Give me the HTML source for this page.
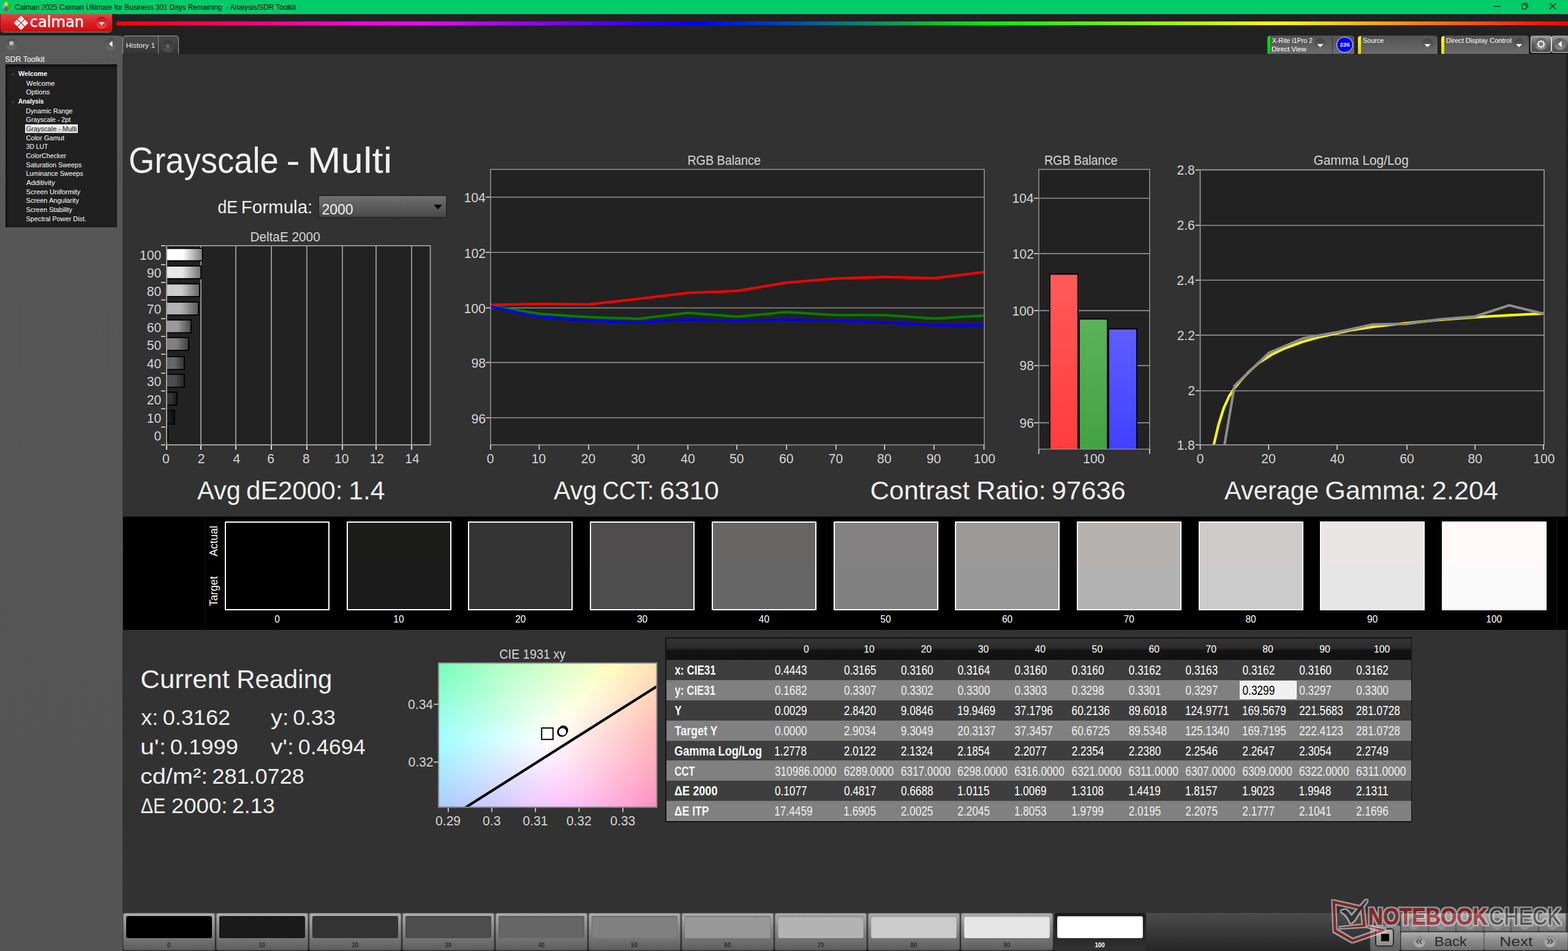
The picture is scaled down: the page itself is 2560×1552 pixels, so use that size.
<!DOCTYPE html>
<html lang="en"><head><meta charset="utf-8"><title>Calman - Grayscale - Multi</title>
<style>
html,body{margin:0;padding:0;background:#323232}
body{width:2560px;height:1552px;overflow:hidden;font-family:"Liberation Sans",sans-serif}
#app{position:relative;width:2560px;height:1552px;overflow:hidden;background:#323232}
#app div,#app svg,#app header,#app aside,#app nav,#app section,#app footer,#app main{position:absolute}
#app header,#app aside,#app nav,#app section,#app footer,#app main,#ribbon,#devices,#watermark{left:0;top:0}
svg{overflow:visible}
svg text{font-family:"Liberation Sans",sans-serif;white-space:pre}
</style></head>
<body><div id="app">
<header id="titlebar"><div style="left:0px;top:0px;width:2560px;height:23px;background:#00cc6a"></div><svg style="left:0px;top:0px" width="2560" height="23" viewBox="0 0 2560 23"><path d="M10 2.6L14.3 6.9L10 11.2L5.7 6.9Z" fill="#ffcc00"/><path d="M5.9 6.7L10.2 11L5.9 15.3L1.6 11Z" fill="#33bbff"/><path d="M14.1 6.7L18.4 11L14.1 15.3L9.8 11Z" fill="#11cc11"/><path d="M10 10.8L14.3 15.1L10 19.4L5.7 15.1Z" fill="#ee2255"/><text x="24.01" y="15.9" font-size="12.2" textLength="459.18" lengthAdjust="spacingAndGlyphs" fill="#000">Calman 2025 Calman Ultimate for Business 301 Days Remaining  - Analysis/SDR Toolkit</text><line x1="2439.3" y1="10.5" x2="2449.5" y2="10.5" stroke="#000" stroke-width="1.1"/><rect x="2484.5" y="7.2" width="7.6" height="7.6" rx="1.6" fill="none" stroke="#000" stroke-width="1.1"/><path d="M2486.6 5.2h5.4a2 2 0 0 1 2 2v5.6" fill="none" stroke="#000" stroke-width="1.1"/><path d="M2530 5L2540.4 15.2M2540.4 5L2530 15.2" fill="none" stroke="#000" stroke-width="1.1"/></svg></header>
<div id="ribbon"><div style="left:0px;top:23px;width:2560px;height:65px;background:#212121"></div><div style="left:190px;top:35px;width:2370px;height:6px;background:linear-gradient(to right,#ff0000 0%,#ff00ff 20%,#0000ff 40%,#00ee00 60%,#ffff00 80%,#ff0000 100%)"></div><div style="left:1px;top:23px;width:182px;height:29.2px;background:linear-gradient(#e24444 0%,#d82222 50%,#cc0c0c 100%);border-radius:0 0 5px 5px;box-shadow:0 1px 0 #8a8a8a,-1px 0 0 #6a1a1a,1px 0 0 #6a1a1a"></div><svg style="left:0px;top:23px" width="190" height="31" viewBox="0 23 190 31"><g transform="translate(34.4 37.35) rotate(45)"><path d="M-0.6 -6.85H-6.85V-0.6" fill="none" stroke="#fff" stroke-width="2.9" stroke-linejoin="round"/><rect x="-5.25" y="-5.25" width="4.7" height="4.7" rx="1" fill="#fff"/><path d="M-0.6 6.85H-6.85V0.6" fill="none" stroke="#fff" stroke-width="2.9" stroke-linejoin="round"/><rect x="-5.25" y="0.55" width="4.7" height="4.7" rx="1" fill="#fff"/><path d="M0.6 -6.85H6.85V-0.6" fill="none" stroke="#fff" stroke-width="2.9" stroke-linejoin="round"/><rect x="0.55" y="-5.25" width="4.7" height="4.7" rx="1" fill="#fff"/><path d="M0.6 6.85H6.85V0.6" fill="none" stroke="#fff" stroke-width="2.9" stroke-linejoin="round"/><rect x="0.55" y="0.55" width="4.7" height="4.7" rx="1" fill="#fff"/></g><text x="48.77" y="43.6" font-size="23.9" textLength="88.28" lengthAdjust="spacingAndGlyphs" fill="#fff" style='font-family:"DejaVu Sans", sans-serif' stroke="#fff" stroke-width="0.45">calman</text><defs><linearGradient id="cbg" x1="0" y1="0" x2="0" y2="1"><stop offset="0" stop-color="#c40c14"/><stop offset="1" stop-color="#e45050"/></linearGradient></defs><circle cx="166" cy="37" r="9.8" fill="url(#cbg)"/><path d="M161 36.2h10l-5 4.9z" fill="#fff"/></svg></div>
<aside id="sidebar"><div style="left:0px;top:58px;width:200px;height:1494px;background:linear-gradient(#5a5a5a 0,#565656 20%,#545454 100%);border-radius:0 4px 0 0"></div><div style="left:9px;top:62.3px;width:19.6px;height:19.6px;border-radius:50%;background:linear-gradient(#4c4c4c,#6c6c6c)"></div><div style="left:14.6px;top:67.2px;width:8px;height:8px;border-radius:50%;background:radial-gradient(circle at 40% 35%,#d8d8d8 0%,#a8a8a8 45%,#6a6a6a 100%)"></div><div style="left:171.1px;top:62.3px;width:19.6px;height:19.6px;border-radius:50%;background:linear-gradient(#4c4c4c,#6c6c6c)"></div><div style="left:9px;top:105px;width:182px;height:266px;background:#202020;box-shadow:inset 2px 3px 4px #0a0a0a"></div><div style="left:41px;top:203px;width:86.3px;height:14px;background:linear-gradient(#f4f4f4,#d0d0d0);border:1px solid #fafafa;box-sizing:border-box"></div><svg style="left:0px;top:58px" width="200" height="320" viewBox="0 58 200 320"><path d="M183.5 66.6v10l-5.4-5z" fill="#fff"/><text x="8.25" y="100.6" font-size="12.2" textLength="64.64" lengthAdjust="spacingAndGlyphs" fill="#fff">SDR Toolkit</text><text x="29.99" y="123.9" font-size="11.3" textLength="47.28" lengthAdjust="spacingAndGlyphs" fill="#fff" font-weight="700">Welcome</text><text x="43.05" y="139.8" font-size="11.3" textLength="46.44" lengthAdjust="spacingAndGlyphs" fill="#fff">Welcome</text><text x="42.56" y="153.9" font-size="11.3" textLength="38.94" lengthAdjust="spacingAndGlyphs" fill="#fff">Options</text><text x="29.75" y="168.9" font-size="11.3" textLength="41.67" lengthAdjust="spacingAndGlyphs" fill="#fff" font-weight="700">Analysis</text><text x="42.22" y="184.8" font-size="11.3" textLength="76.36" lengthAdjust="spacingAndGlyphs" fill="#fff">Dynamic Range</text><text x="42.56" y="198.9" font-size="11.3" textLength="72.62" lengthAdjust="spacingAndGlyphs" fill="#fff">Grayscale - 2pt</text><text x="42.75" y="213.9" font-size="11.3" textLength="82.49" lengthAdjust="spacingAndGlyphs" fill="#222">Grayscale - Multi</text><text x="42.54" y="228.9" font-size="11.3" textLength="62.54" lengthAdjust="spacingAndGlyphs" fill="#fff">Color Gamut</text><text x="42.71" y="243" font-size="11.3" textLength="35.53" lengthAdjust="spacingAndGlyphs" fill="#fff">3D LUT</text><text x="42.56" y="257.8" font-size="11.3" textLength="65.42" lengthAdjust="spacingAndGlyphs" fill="#fff">ColorChecker</text><text x="42.61" y="272.8" font-size="11.3" textLength="90.88" lengthAdjust="spacingAndGlyphs" fill="#fff">Saturation Sweeps</text><text x="42.42" y="286.9" font-size="11.3" textLength="93.36" lengthAdjust="spacingAndGlyphs" fill="#fff">Luminance Sweeps</text><text x="43.08" y="301.9" font-size="11.3" textLength="46.75" lengthAdjust="spacingAndGlyphs" fill="#fff">Additivity</text><text x="42.59" y="316.9" font-size="11.3" textLength="88.63" lengthAdjust="spacingAndGlyphs" fill="#fff">Screen Uniformity</text><text x="42.6" y="330.9" font-size="11.3" textLength="86.32" lengthAdjust="spacingAndGlyphs" fill="#fff">Screen Angularity</text><text x="42.61" y="345.9" font-size="11.3" textLength="75.31" lengthAdjust="spacingAndGlyphs" fill="#fff">Screen Stability</text><text x="42.61" y="360.9" font-size="11.3" textLength="98.49" lengthAdjust="spacingAndGlyphs" fill="#fff">Spectral Power Dist.</text><path d="M23 122.7h-5.6l5.6-3.6z" fill="#484848"/><path d="M23 167.7h-5.6l5.6-3.6z" fill="#484848"/></svg></aside>
<nav id="tabs"><div style="left:199.6px;top:58px;width:92.6px;height:30px;background:linear-gradient(#4a4a4a,#343434);border:1px solid #9a9a9a;border-bottom:none;border-radius:5px 5px 0 0;box-sizing:border-box"></div><div style="left:258px;top:59px;width:1.2px;height:29px;background:#8a8a8a"></div><div style="left:264.4px;top:65.3px;width:19.6px;height:19.6px;border-radius:50%;background:linear-gradient(#363636,#4e4e4e)"></div><svg style="left:200px;top:58px" width="100" height="30" viewBox="200 58 100 30"><text x="205.51" y="77.7" font-size="11.6" textLength="47.68" lengthAdjust="spacingAndGlyphs" fill="#eee">History 1</text><path d="M274.1 71.6v7.2M270.5 75.2h7.2" stroke="#888" stroke-width="1.1" fill="none"/></svg></nav>
<div id="devices"><div style="left:2068.5px;top:58px;width:142.5px;height:30px;background:linear-gradient(#535353,#6b6b6b);border-radius:5px 5px 0 0"></div><div style="left:2069px;top:59px;width:5.2px;height:29px;background:linear-gradient(#00e000,#00c800);border-radius:4px 0 0 0"></div><div style="left:2217px;top:58px;width:130px;height:30px;background:linear-gradient(#535353,#6b6b6b);border-radius:5px 5px 0 0"></div><div style="left:2217.3px;top:59px;width:5.2px;height:29px;background:linear-gradient(#ffff00,#d8d800);border-radius:4px 0 0 0"></div><div style="left:2353px;top:58px;width:143.2px;height:30px;background:linear-gradient(#535353,#6b6b6b);border-radius:5px 5px 0 0"></div><div style="left:2353.3px;top:59px;width:5.2px;height:29px;background:linear-gradient(#ffff00,#d8d800);border-radius:4px 0 0 0"></div><div style="left:2145.5px;top:62.8px;width:20px;height:20px;border-radius:50%;background:linear-gradient(#424242,#6e6e6e)"></div><div style="left:2320.6px;top:62.8px;width:20px;height:20px;border-radius:50%;background:linear-gradient(#424242,#6e6e6e)"></div><div style="left:2470.1px;top:62.8px;width:20px;height:20px;border-radius:50%;background:linear-gradient(#424242,#6e6e6e)"></div><div style="left:2174.6px;top:61px;width:1.2px;height:27px;background:#3c3c3c"></div><div style="left:2182.3px;top:59.6px;width:26.6px;height:26.6px;border-radius:50%;background:#0000f0;border:1px solid #e8e8ff;box-sizing:border-box"></div><div style="left:2499px;top:57.5px;width:34px;height:28.7px;background:linear-gradient(#9c9c9c,#5a5a5a 55%,#4e4e4e);border:1px solid #d8d8d8;border-top-color:#8a8a8a;border-radius:4px;box-sizing:border-box"></div><div style="left:2533px;top:57.5px;width:34px;height:28.7px;background:linear-gradient(#9c9c9c,#5a5a5a 55%,#4e4e4e);border:1px solid #d8d8d8;border-top-color:#8a8a8a;border-radius:4px;box-sizing:border-box"></div><div style="left:2506.4px;top:62.2px;width:19.4px;height:19.4px;border-radius:50%;background:linear-gradient(#5a5a5a,#8a8a8a)"></div><div style="left:2537.2px;top:62.2px;width:19.4px;height:19.4px;border-radius:50%;background:linear-gradient(#5a5a5a,#8a8a8a)"></div><svg style="left:2060px;top:56px" width="500" height="34" viewBox="2060 56 500 34"><text x="2076.66" y="70.1" font-size="11.5" textLength="66.38" lengthAdjust="spacingAndGlyphs" fill="#fff">X-Rite i1Pro 2</text><text x="2076.08" y="83.8" font-size="11.5" textLength="56.69" lengthAdjust="spacingAndGlyphs" fill="#fff">Direct View</text><text x="2225.01" y="70" font-size="11.5" textLength="34.37" lengthAdjust="spacingAndGlyphs" fill="#fff">Source</text><text x="2360.79" y="69.7" font-size="11.5" textLength="107.15" lengthAdjust="spacingAndGlyphs" fill="#fff">Direct Display Control</text><path d="M2150.4 72.1h10.2l-5.1 5z" fill="#fff"/><path d="M2325.5 72.1h10.2l-5.1 5z" fill="#fff"/><path d="M2475 72.1h10.2l-5.1 5z" fill="#fff"/><text x="2187.46" y="76.3" font-size="9.6" textLength="16.21" lengthAdjust="spacingAndGlyphs" fill="#fff" font-weight="700">235</text><g transform="translate(2516.1 72)"><rect x="-1.5" y="-6.6" width="3" height="3" transform="rotate(0)" fill="#ddd"/><rect x="-1.5" y="-6.6" width="3" height="3" transform="rotate(45)" fill="#ddd"/><rect x="-1.5" y="-6.6" width="3" height="3" transform="rotate(90)" fill="#ddd"/><rect x="-1.5" y="-6.6" width="3" height="3" transform="rotate(135)" fill="#ddd"/><rect x="-1.5" y="-6.6" width="3" height="3" transform="rotate(180)" fill="#ddd"/><rect x="-1.5" y="-6.6" width="3" height="3" transform="rotate(225)" fill="#ddd"/><rect x="-1.5" y="-6.6" width="3" height="3" transform="rotate(270)" fill="#ddd"/><rect x="-1.5" y="-6.6" width="3" height="3" transform="rotate(315)" fill="#ddd"/><circle r="4.1" fill="none" stroke="#ddd" stroke-width="1.9"/></g><path d="M2549.6 66.8v10.4l-5.8-5.2z" fill="#fff"/></svg></div>
<main id="main"><div style="left:200px;top:88px;width:2360px;height:1.4px;background:#2a2a2a"></div><div style="left:2556px;top:88px;width:4px;height:1402px;background:linear-gradient(to right,#2e2e2e,#1c1c1c)"></div><div style="left:519px;top:318.2px;width:210.7px;height:37.8px;background:linear-gradient(#707070,#484848);border:2px solid #282828;box-sizing:border-box"></div><svg style="left:200px;top:225px" width="2360" height="600" viewBox="200 225 2360 600"><text y="282.2" font-size="59.4" fill="#f0f0f0"><tspan x="209.97" textLength="244.75" lengthAdjust="spacingAndGlyphs">Grayscale</tspan> <tspan x="467.38" textLength="22.64" lengthAdjust="spacingAndGlyphs">-</tspan> <tspan x="502.02" textLength="138.39" lengthAdjust="spacingAndGlyphs">Multi</tspan></text><text y="347.8" font-size="29" fill="#f0f0f0"><tspan x="355.49" textLength="32.35" lengthAdjust="spacingAndGlyphs">dE</tspan> <tspan x="393.68" textLength="116.62" lengthAdjust="spacingAndGlyphs">Formula:</tspan></text><text x="525.44" y="349.9" font-size="23" textLength="51.15" lengthAdjust="spacingAndGlyphs" fill="#f0f0f0">2000</text><path d="M708.2 334h13.6l-6.8 7.8z" fill="#000"/><text y="815.1" font-size="42.4" fill="#f0f0f0"><tspan x="322.02" textLength="70.73" lengthAdjust="spacingAndGlyphs">Avg</tspan> <tspan x="401.92" textLength="157.64" lengthAdjust="spacingAndGlyphs">dE2000:</tspan> <tspan x="569.24" textLength="59.41" lengthAdjust="spacingAndGlyphs">1.4</tspan></text><text y="815.1" font-size="42.4" fill="#f0f0f0"><tspan x="904.02" textLength="70.31" lengthAdjust="spacingAndGlyphs">Avg</tspan> <tspan x="983.58" textLength="83.8" lengthAdjust="spacingAndGlyphs">CCT:</tspan> <tspan x="1077.29" textLength="96.71" lengthAdjust="spacingAndGlyphs">6310</tspan></text><text y="815.1" font-size="42.4" fill="#f0f0f0"><tspan x="1420.72" textLength="162.5" lengthAdjust="spacingAndGlyphs">Contrast</tspan> <tspan x="1593.92" textLength="113.85" lengthAdjust="spacingAndGlyphs">Ratio:</tspan> <tspan x="1716.86" textLength="120.95" lengthAdjust="spacingAndGlyphs">97636</tspan></text><text y="815.1" font-size="42.4" fill="#f0f0f0"><tspan x="1999.12" textLength="153.92" lengthAdjust="spacingAndGlyphs">Average</tspan> <tspan x="2163.33" textLength="165.41" lengthAdjust="spacingAndGlyphs">Gamma:</tspan> <tspan x="2337.82" textLength="108.35" lengthAdjust="spacingAndGlyphs">2.204</tspan></text></svg><section id="charts"><svg style="left:210px;top:370px" width="520" height="400" viewBox="210 370 520 400"><rect x="272" y="401" width="430.5" height="325" fill="#222222"/><line x1="328" y1="401" x2="328" y2="726" stroke="#929292" stroke-width="2"/><line x1="385" y1="401" x2="385" y2="726" stroke="#929292" stroke-width="2"/><line x1="443" y1="401" x2="443" y2="726" stroke="#929292" stroke-width="2"/><line x1="501" y1="401" x2="501" y2="726" stroke="#929292" stroke-width="2"/><line x1="559" y1="401" x2="559" y2="726" stroke="#929292" stroke-width="2"/><line x1="614" y1="401" x2="614" y2="726" stroke="#929292" stroke-width="2"/><line x1="672" y1="401" x2="672" y2="726" stroke="#929292" stroke-width="2"/><defs><linearGradient id="db0" x1="0" x2="1" y1="0" y2="0"><stop offset="0" stop-color="#000000"/><stop offset="0.45" stop-color="#000000"/><stop offset="1" stop-color="#000000"/></linearGradient><linearGradient id="db1" x1="0" x2="1" y1="0" y2="0"><stop offset="0" stop-color="#1a1a1a"/><stop offset="0.45" stop-color="#1a1a1a"/><stop offset="1" stop-color="#0d0d0d"/></linearGradient><linearGradient id="db2" x1="0" x2="1" y1="0" y2="0"><stop offset="0" stop-color="#333333"/><stop offset="0.45" stop-color="#333333"/><stop offset="1" stop-color="#191919"/></linearGradient><linearGradient id="db3" x1="0" x2="1" y1="0" y2="0"><stop offset="0" stop-color="#4d4d4d"/><stop offset="0.45" stop-color="#4d4d4d"/><stop offset="1" stop-color="#262626"/></linearGradient><linearGradient id="db4" x1="0" x2="1" y1="0" y2="0"><stop offset="0" stop-color="#666666"/><stop offset="0.45" stop-color="#666666"/><stop offset="1" stop-color="#333333"/></linearGradient><linearGradient id="db5" x1="0" x2="1" y1="0" y2="0"><stop offset="0" stop-color="#808080"/><stop offset="0.45" stop-color="#808080"/><stop offset="1" stop-color="#404040"/></linearGradient><linearGradient id="db6" x1="0" x2="1" y1="0" y2="0"><stop offset="0" stop-color="#999999"/><stop offset="0.45" stop-color="#999999"/><stop offset="1" stop-color="#4c4c4c"/></linearGradient><linearGradient id="db7" x1="0" x2="1" y1="0" y2="0"><stop offset="0" stop-color="#b3b3b3"/><stop offset="0.45" stop-color="#b3b3b3"/><stop offset="1" stop-color="#595959"/></linearGradient><linearGradient id="db8" x1="0" x2="1" y1="0" y2="0"><stop offset="0" stop-color="#cccccc"/><stop offset="0.45" stop-color="#cccccc"/><stop offset="1" stop-color="#666666"/></linearGradient><linearGradient id="db9" x1="0" x2="1" y1="0" y2="0"><stop offset="0" stop-color="#e6e6e6"/><stop offset="0.45" stop-color="#e6e6e6"/><stop offset="1" stop-color="#737373"/></linearGradient><linearGradient id="db10" x1="0" x2="1" y1="0" y2="0"><stop offset="0" stop-color="#ffffff"/><stop offset="0.45" stop-color="#ffffff"/><stop offset="1" stop-color="#7f7f7f"/></linearGradient></defs><rect x="272" y="697.8" width="3" height="23.5" fill="#000"/><rect x="272.8" y="699.6" width="0.4" height="19.9" fill="url(#db0)"/><rect x="272" y="669" width="13.8" height="23.9" fill="#000"/><rect x="272.8" y="670.8" width="11.2" height="20.3" fill="url(#db1)"/><rect x="272" y="639.2" width="17.8" height="22.9" fill="#000"/><rect x="272.8" y="641" width="15.2" height="19.3" fill="url(#db2)"/><rect x="272" y="609.9" width="29.8" height="23" fill="#000"/><rect x="272.8" y="611.7" width="27.2" height="19.4" fill="url(#db3)"/><rect x="272" y="581.1" width="29.8" height="22.8" fill="#000"/><rect x="272.8" y="582.9" width="27.2" height="19.2" fill="url(#db4)"/><rect x="272" y="550" width="36.8" height="22.7" fill="#000"/><rect x="272.8" y="551.8" width="34.2" height="19.1" fill="url(#db5)"/><rect x="272" y="521.3" width="40.8" height="22.7" fill="#000"/><rect x="272.8" y="523.1" width="38.2" height="19.1" fill="url(#db6)"/><rect x="272" y="492.1" width="53" height="22.9" fill="#000"/><rect x="272.8" y="493.9" width="50.4" height="19.3" fill="url(#db7)"/><rect x="272" y="462.4" width="54.7" height="22.5" fill="#000"/><rect x="272.8" y="464.2" width="52.1" height="18.9" fill="url(#db8)"/><rect x="272" y="433.2" width="57" height="22.5" fill="#000"/><rect x="272.8" y="435" width="54.4" height="18.9" fill="url(#db9)"/><rect x="272" y="404.5" width="59.5" height="22" fill="#000"/><rect x="272.8" y="406.3" width="56.9" height="18.4" fill="url(#db10)"/><line x1="271" y1="401" x2="703.5" y2="401" stroke="#929292" stroke-width="2"/><line x1="702.5" y1="401" x2="702.5" y2="726" stroke="#929292" stroke-width="2"/><line x1="271" y1="726" x2="703.5" y2="726" stroke="#a0a0a0" stroke-width="2"/><line x1="272" y1="401" x2="272" y2="726" stroke="#a0a0a0" stroke-width="2"/><line x1="263" y1="401" x2="270" y2="401" stroke="#dcdcdc" stroke-width="1.6"/><line x1="263" y1="432" x2="270" y2="432" stroke="#dcdcdc" stroke-width="1.6"/><line x1="263" y1="461" x2="270" y2="461" stroke="#dcdcdc" stroke-width="1.6"/><line x1="263" y1="489.5" x2="270" y2="489.5" stroke="#dcdcdc" stroke-width="1.6"/><line x1="263" y1="520" x2="270" y2="520" stroke="#dcdcdc" stroke-width="1.6"/><line x1="263" y1="549" x2="270" y2="549" stroke="#dcdcdc" stroke-width="1.6"/><line x1="263" y1="578" x2="270" y2="578" stroke="#dcdcdc" stroke-width="1.6"/><line x1="263" y1="609" x2="270" y2="609" stroke="#dcdcdc" stroke-width="1.6"/><line x1="263" y1="638" x2="270" y2="638" stroke="#dcdcdc" stroke-width="1.6"/><line x1="263" y1="667" x2="270" y2="667" stroke="#dcdcdc" stroke-width="1.6"/><line x1="263" y1="697" x2="270" y2="697" stroke="#dcdcdc" stroke-width="1.6"/><line x1="263" y1="726" x2="270" y2="726" stroke="#dcdcdc" stroke-width="1.6"/><text x="228.12" y="423.6" font-size="22.4" textLength="35.21" lengthAdjust="spacingAndGlyphs" fill="#d6d6d6">100</text><text x="239.85" y="453.15" font-size="22.4" textLength="23.47" lengthAdjust="spacingAndGlyphs" fill="#d6d6d6">90</text><text x="239.85" y="482.7" font-size="22.4" textLength="23.47" lengthAdjust="spacingAndGlyphs" fill="#d6d6d6">80</text><text x="239.85" y="512.25" font-size="22.4" textLength="23.47" lengthAdjust="spacingAndGlyphs" fill="#d6d6d6">70</text><text x="239.85" y="541.8" font-size="22.4" textLength="23.47" lengthAdjust="spacingAndGlyphs" fill="#d6d6d6">60</text><text x="239.85" y="571.35" font-size="22.4" textLength="23.47" lengthAdjust="spacingAndGlyphs" fill="#d6d6d6">50</text><text x="239.85" y="600.9" font-size="22.4" textLength="23.47" lengthAdjust="spacingAndGlyphs" fill="#d6d6d6">40</text><text x="239.85" y="630.45" font-size="22.4" textLength="23.47" lengthAdjust="spacingAndGlyphs" fill="#d6d6d6">30</text><text x="239.85" y="660" font-size="22.4" textLength="23.47" lengthAdjust="spacingAndGlyphs" fill="#d6d6d6">20</text><text x="239.85" y="689.55" font-size="22.4" textLength="23.47" lengthAdjust="spacingAndGlyphs" fill="#d6d6d6">10</text><text x="251.59" y="719.1" font-size="22.4" textLength="11.74" lengthAdjust="spacingAndGlyphs" fill="#d6d6d6">0</text><line x1="272" y1="727" x2="272" y2="734" stroke="#dcdcdc" stroke-width="2"/><line x1="328" y1="727" x2="328" y2="734" stroke="#dcdcdc" stroke-width="2"/><line x1="385" y1="727" x2="385" y2="734" stroke="#dcdcdc" stroke-width="2"/><line x1="443" y1="727" x2="443" y2="734" stroke="#dcdcdc" stroke-width="2"/><line x1="501" y1="727" x2="501" y2="734" stroke="#dcdcdc" stroke-width="2"/><line x1="559" y1="727" x2="559" y2="734" stroke="#dcdcdc" stroke-width="2"/><line x1="614" y1="727" x2="614" y2="734" stroke="#dcdcdc" stroke-width="2"/><line x1="672" y1="727" x2="672" y2="734" stroke="#dcdcdc" stroke-width="2"/><text x="264.93" y="756" font-size="22.4" textLength="11.74" lengthAdjust="spacingAndGlyphs" fill="#d6d6d6">0</text><text x="322.83" y="756" font-size="22.4" textLength="11.74" lengthAdjust="spacingAndGlyphs" fill="#d6d6d6">2</text><text x="380.6" y="756" font-size="22.4" textLength="11.74" lengthAdjust="spacingAndGlyphs" fill="#d6d6d6">4</text><text x="436.26" y="756" font-size="22.4" textLength="11.74" lengthAdjust="spacingAndGlyphs" fill="#d6d6d6">6</text><text x="493.93" y="756" font-size="22.4" textLength="11.74" lengthAdjust="spacingAndGlyphs" fill="#d6d6d6">8</text><text x="546.07" y="756" font-size="22.4" textLength="23.47" lengthAdjust="spacingAndGlyphs" fill="#d6d6d6">10</text><text x="603.59" y="756" font-size="22.4" textLength="23.47" lengthAdjust="spacingAndGlyphs" fill="#d6d6d6">12</text><text x="661.37" y="756" font-size="22.4" textLength="23.47" lengthAdjust="spacingAndGlyphs" fill="#d6d6d6">14</text><text x="408.4" y="393.7" font-size="21.4" textLength="114.32" lengthAdjust="spacingAndGlyphs" fill="#d6d6d6">DeltaE 2000</text></svg><svg style="left:740px;top:240px" width="900" height="530" viewBox="740 240 900 530"><rect x="801" y="276.5" width="806" height="449.5" fill="#222222"/><line x1="801" y1="321.7" x2="1607" y2="321.7" stroke="#929292" stroke-width="1.6"/><line x1="801" y1="411.8" x2="1607" y2="411.8" stroke="#929292" stroke-width="1.6"/><line x1="801" y1="502.5" x2="1607" y2="502.5" stroke="#929292" stroke-width="1.6"/><line x1="801" y1="591.6" x2="1607" y2="591.6" stroke="#929292" stroke-width="1.6"/><line x1="801" y1="681.8" x2="1607" y2="681.8" stroke="#929292" stroke-width="1.6"/><clipPath id="rlc"><rect x="801" y="276.5" width="806" height="449.5"/></clipPath><g clip-path="url(#rlc)"><polyline points="801,497.6 880.3,496.1 961,496.8 1042,487.7 1123.1,478.1 1203.1,474.8 1284.2,461.2 1364.9,454.5 1444.2,451.9 1524.9,454 1606.5,444.1" fill="none" stroke="#ff0000" stroke-width="4" stroke-linejoin="round"/><polyline points="801,499.4 880.3,511.9 961,517.6 1042,520.2 1123.1,510.6 1203.1,516.8 1284.2,509.3 1364.9,514.2 1444.2,514.2 1524.9,519.7 1606.5,515" fill="none" stroke="#008000" stroke-width="4" stroke-linejoin="round"/><polyline points="801,500.2 880.3,517.1 961,524.1 1042,526.2 1123.1,521.5 1203.1,524.1 1284.2,521.5 1364.9,523.6 1444.2,526.2 1524.9,530.6 1606.5,531.1" fill="none" stroke="#0000ff" stroke-width="4" stroke-linejoin="round"/></g><rect x="801" y="276.5" width="806" height="449.5" fill="none" stroke="#929292" stroke-width="1.6"/><line x1="793" y1="321.7" x2="800.2" y2="321.7" stroke="#dcdcdc" stroke-width="1.6"/><text x="757.41" y="330.4" font-size="22.4" textLength="35.21" lengthAdjust="spacingAndGlyphs" fill="#d6d6d6">104</text><line x1="793" y1="411.8" x2="800.2" y2="411.8" stroke="#dcdcdc" stroke-width="1.6"/><text x="757.86" y="420.5" font-size="22.4" textLength="35.21" lengthAdjust="spacingAndGlyphs" fill="#d6d6d6">102</text><line x1="793" y1="502.5" x2="800.2" y2="502.5" stroke="#dcdcdc" stroke-width="1.6"/><text x="757.62" y="511.2" font-size="22.4" textLength="35.21" lengthAdjust="spacingAndGlyphs" fill="#d6d6d6">100</text><line x1="793" y1="591.6" x2="800.2" y2="591.6" stroke="#dcdcdc" stroke-width="1.6"/><text x="769.45" y="600.3" font-size="22.4" textLength="23.47" lengthAdjust="spacingAndGlyphs" fill="#d6d6d6">98</text><line x1="793" y1="681.8" x2="800.2" y2="681.8" stroke="#dcdcdc" stroke-width="1.6"/><text x="769.46" y="690.5" font-size="22.4" textLength="23.47" lengthAdjust="spacingAndGlyphs" fill="#d6d6d6">96</text><line x1="801" y1="726" x2="801" y2="734" stroke="#dcdcdc" stroke-width="1.6"/><text x="794.83" y="755.6" font-size="22.4" textLength="11.74" lengthAdjust="spacingAndGlyphs" fill="#d6d6d6">0</text><line x1="880.3" y1="726" x2="880.3" y2="734" stroke="#dcdcdc" stroke-width="1.6"/><text x="867.87" y="755.6" font-size="22.4" textLength="23.47" lengthAdjust="spacingAndGlyphs" fill="#d6d6d6">10</text><line x1="961" y1="726" x2="961" y2="734" stroke="#dcdcdc" stroke-width="1.6"/><text x="948.85" y="755.6" font-size="22.4" textLength="23.47" lengthAdjust="spacingAndGlyphs" fill="#d6d6d6">20</text><line x1="1042" y1="726" x2="1042" y2="734" stroke="#dcdcdc" stroke-width="1.6"/><text x="1029.98" y="755.6" font-size="22.4" textLength="23.47" lengthAdjust="spacingAndGlyphs" fill="#d6d6d6">30</text><line x1="1123.1" y1="726" x2="1123.1" y2="734" stroke="#dcdcdc" stroke-width="1.6"/><text x="1111.23" y="755.6" font-size="22.4" textLength="23.47" lengthAdjust="spacingAndGlyphs" fill="#d6d6d6">40</text><line x1="1203.1" y1="726" x2="1203.1" y2="734" stroke="#dcdcdc" stroke-width="1.6"/><text x="1191.05" y="755.6" font-size="22.4" textLength="23.47" lengthAdjust="spacingAndGlyphs" fill="#d6d6d6">50</text><line x1="1284.2" y1="726" x2="1284.2" y2="734" stroke="#dcdcdc" stroke-width="1.6"/><text x="1272.04" y="755.6" font-size="22.4" textLength="23.47" lengthAdjust="spacingAndGlyphs" fill="#d6d6d6">60</text><line x1="1364.9" y1="726" x2="1364.9" y2="734" stroke="#dcdcdc" stroke-width="1.6"/><text x="1352.74" y="755.6" font-size="22.4" textLength="23.47" lengthAdjust="spacingAndGlyphs" fill="#d6d6d6">70</text><line x1="1444.2" y1="726" x2="1444.2" y2="734" stroke="#dcdcdc" stroke-width="1.6"/><text x="1432.12" y="755.6" font-size="22.4" textLength="23.47" lengthAdjust="spacingAndGlyphs" fill="#d6d6d6">80</text><line x1="1524.9" y1="726" x2="1524.9" y2="734" stroke="#dcdcdc" stroke-width="1.6"/><text x="1512.78" y="755.6" font-size="22.4" textLength="23.47" lengthAdjust="spacingAndGlyphs" fill="#d6d6d6">90</text><line x1="1606.5" y1="726" x2="1606.5" y2="734" stroke="#dcdcdc" stroke-width="1.6"/><text x="1589.71" y="755.6" font-size="22.4" textLength="35.21" lengthAdjust="spacingAndGlyphs" fill="#d6d6d6">100</text><text x="1122.38" y="269.4" font-size="21.4" textLength="119.49" lengthAdjust="spacingAndGlyphs" fill="#d6d6d6">RGB Balance</text></svg><svg style="left:1640px;top:240px" width="260" height="530" viewBox="1640 240 260 530"><rect x="1696" y="276.5" width="181" height="456.5" fill="#222222"/><line x1="1696" y1="323.5" x2="1877" y2="323.5" stroke="#929292" stroke-width="1.6"/><line x1="1696" y1="413.9" x2="1877" y2="413.9" stroke="#929292" stroke-width="1.6"/><line x1="1696" y1="506.9" x2="1877" y2="506.9" stroke="#929292" stroke-width="1.6"/><line x1="1696" y1="596.6" x2="1877" y2="596.6" stroke="#929292" stroke-width="1.6"/><line x1="1696" y1="689.9" x2="1877" y2="689.9" stroke="#929292" stroke-width="1.6"/><defs><linearGradient id="br" x1="0" x2="0" y1="0" y2="1"><stop offset="0" stop-color="#ff5a5a"/><stop offset="1" stop-color="#ff3c3c"/></linearGradient><linearGradient id="bg" x1="0" x2="0" y1="0" y2="1"><stop offset="0" stop-color="#5cb25c"/><stop offset="1" stop-color="#42a242"/></linearGradient><linearGradient id="bb" x1="0" x2="0" y1="0" y2="1"><stop offset="0" stop-color="#5e5eff"/><stop offset="1" stop-color="#4040ff"/></linearGradient></defs><rect x="1713.95" y="447.35" width="46.1" height="286.6" fill="url(#br)" stroke="#000" stroke-width="1.9"/><rect x="1761.95" y="520.55" width="46.1" height="213.4" fill="url(#bg)" stroke="#000" stroke-width="1.9"/><rect x="1809.95" y="536.65" width="46.1" height="197.3" fill="url(#bb)" stroke="#000" stroke-width="1.9"/><rect x="1696" y="276.5" width="181" height="456.5" fill="none" stroke="#929292" stroke-width="1.6"/><rect x="1700" y="733.8" width="173" height="4" fill="#323232"/><line x1="1688" y1="323.5" x2="1695.2" y2="323.5" stroke="#dcdcdc" stroke-width="1.6"/><text x="1652.41" y="331.2" font-size="22.4" textLength="35.21" lengthAdjust="spacingAndGlyphs" fill="#d6d6d6">104</text><line x1="1688" y1="413.9" x2="1695.2" y2="413.9" stroke="#dcdcdc" stroke-width="1.6"/><text x="1652.86" y="421.6" font-size="22.4" textLength="35.21" lengthAdjust="spacingAndGlyphs" fill="#d6d6d6">102</text><line x1="1688" y1="506.9" x2="1695.2" y2="506.9" stroke="#dcdcdc" stroke-width="1.6"/><text x="1652.62" y="514.6" font-size="22.4" textLength="35.21" lengthAdjust="spacingAndGlyphs" fill="#d6d6d6">100</text><line x1="1688" y1="596.6" x2="1695.2" y2="596.6" stroke="#dcdcdc" stroke-width="1.6"/><text x="1664.45" y="604.3" font-size="22.4" textLength="23.47" lengthAdjust="spacingAndGlyphs" fill="#d6d6d6">98</text><line x1="1688" y1="689.9" x2="1695.2" y2="689.9" stroke="#dcdcdc" stroke-width="1.6"/><text x="1664.46" y="697.6" font-size="22.4" textLength="23.47" lengthAdjust="spacingAndGlyphs" fill="#d6d6d6">96</text><line x1="1696" y1="733" x2="1696" y2="741" stroke="#dcdcdc" stroke-width="1.6"/><line x1="1877" y1="733" x2="1877" y2="741" stroke="#dcdcdc" stroke-width="1.6"/><text x="1768.21" y="755.6" font-size="22.4" textLength="35.21" lengthAdjust="spacingAndGlyphs" fill="#d6d6d6">100</text><text x="1704.88" y="269.4" font-size="21.4" textLength="119.49" lengthAdjust="spacingAndGlyphs" fill="#d6d6d6">RGB Balance</text></svg><svg style="left:1900px;top:240px" width="660" height="530" viewBox="1900 240 660 530"><rect x="1959.5" y="277.3" width="561.5" height="448.7" fill="#222222"/><line x1="1959.5" y1="277.3" x2="2521" y2="277.3" stroke="#929292" stroke-width="1.6"/><line x1="1959.5" y1="367.7" x2="2521" y2="367.7" stroke="#929292" stroke-width="1.6"/><line x1="1959.5" y1="457.3" x2="2521" y2="457.3" stroke="#929292" stroke-width="1.6"/><line x1="1959.5" y1="546.9" x2="2521" y2="546.9" stroke="#929292" stroke-width="1.6"/><line x1="1959.5" y1="637.7" x2="2521" y2="637.7" stroke="#929292" stroke-width="1.6"/><line x1="1959.5" y1="726" x2="2521" y2="726" stroke="#929292" stroke-width="1.6"/><clipPath id="gc"><rect x="1959.5" y="277.3" width="561.5" height="448.7"/></clipPath><g clip-path="url(#gc)"><polyline points="1975,760 1982.2,723.6 1989.2,694 1997.9,666.2 2006.6,647 2017,631.4 2027.4,619.2 2039.6,606.2 2055.3,592.2 2076.2,578.7 2097,568.7 2126.6,557.8 2152.7,550.5 2178.8,544.7 2208.4,538.3 2244.7,533 2296.6,527.3 2348.6,522.1 2408.3,517.7 2465.5,514.3 2520,511.7" fill="none" stroke="#ffff00" stroke-width="4.2" stroke-linejoin="round"/><polyline points="1959.5,959.21 2015.55,629.83 2071.6,575.92 2127.65,552.15 2183.7,542.15 2239.75,529.72 2295.8,528.56 2351.85,521.11 2407.9,516.58 2463.95,498.33 2520,512.01" fill="none" stroke="#8c8c8c" stroke-width="4.2" stroke-linejoin="round"/></g><rect x="1959.5" y="277.3" width="561.5" height="448.7" fill="none" stroke="#929292" stroke-width="1.8"/><line x1="1951.5" y1="277.3" x2="1958.6" y2="277.3" stroke="#dcdcdc" stroke-width="1.6"/><text x="1921.48" y="285" font-size="22.4" textLength="29.33" lengthAdjust="spacingAndGlyphs" fill="#d6d6d6">2.8</text><line x1="1951.5" y1="367.7" x2="1958.6" y2="367.7" stroke="#dcdcdc" stroke-width="1.6"/><text x="1921.49" y="375.4" font-size="22.4" textLength="29.33" lengthAdjust="spacingAndGlyphs" fill="#d6d6d6">2.6</text><line x1="1951.5" y1="457.3" x2="1958.6" y2="457.3" stroke="#dcdcdc" stroke-width="1.6"/><text x="1921.19" y="465" font-size="22.4" textLength="29.33" lengthAdjust="spacingAndGlyphs" fill="#d6d6d6">2.4</text><line x1="1951.5" y1="546.9" x2="1958.6" y2="546.9" stroke="#dcdcdc" stroke-width="1.6"/><text x="1921.63" y="554.6" font-size="22.4" textLength="29.33" lengthAdjust="spacingAndGlyphs" fill="#d6d6d6">2.2</text><line x1="1951.5" y1="637.7" x2="1958.6" y2="637.7" stroke="#dcdcdc" stroke-width="1.6"/><text x="1939.23" y="645.4" font-size="22.4" textLength="11.74" lengthAdjust="spacingAndGlyphs" fill="#d6d6d6">2</text><line x1="1951.5" y1="726" x2="1958.6" y2="726" stroke="#dcdcdc" stroke-width="1.6"/><text x="1921.48" y="733.7" font-size="22.4" textLength="29.33" lengthAdjust="spacingAndGlyphs" fill="#d6d6d6">1.8</text><line x1="1959.5" y1="726" x2="1959.5" y2="734" stroke="#dcdcdc" stroke-width="1.6"/><text x="1953.63" y="755.8" font-size="22.4" textLength="11.74" lengthAdjust="spacingAndGlyphs" fill="#d6d6d6">0</text><line x1="2071.2" y1="726" x2="2071.2" y2="734" stroke="#dcdcdc" stroke-width="1.6"/><text x="2059.35" y="755.8" font-size="22.4" textLength="23.47" lengthAdjust="spacingAndGlyphs" fill="#d6d6d6">20</text><line x1="2183.1" y1="726" x2="2183.1" y2="734" stroke="#dcdcdc" stroke-width="1.6"/><text x="2171.53" y="755.8" font-size="22.4" textLength="23.47" lengthAdjust="spacingAndGlyphs" fill="#d6d6d6">40</text><line x1="2297.1" y1="726" x2="2297.1" y2="734" stroke="#dcdcdc" stroke-width="1.6"/><text x="2285.24" y="755.8" font-size="22.4" textLength="23.47" lengthAdjust="spacingAndGlyphs" fill="#d6d6d6">60</text><line x1="2408.3" y1="726" x2="2408.3" y2="734" stroke="#dcdcdc" stroke-width="1.6"/><text x="2396.52" y="755.8" font-size="22.4" textLength="23.47" lengthAdjust="spacingAndGlyphs" fill="#d6d6d6">80</text><line x1="2520" y1="726" x2="2520" y2="734" stroke="#dcdcdc" stroke-width="1.6"/><text x="2503.21" y="755.8" font-size="22.4" textLength="35.21" lengthAdjust="spacingAndGlyphs" fill="#d6d6d6">100</text><text x="2144.45" y="269.4" font-size="21.4" textLength="155.39" lengthAdjust="spacingAndGlyphs" fill="#d6d6d6">Gamma Log/Log</text></svg></section><section id="swatches"><div style="left:200.5px;top:843px;width:2360px;height:185px;background:#000"></div><div style="left:335px;top:843px;width:1px;height:185px;background:#141414"></div><div style="left:2541px;top:843px;width:1px;height:185px;background:#141414"></div><div style="left:367px;top:851px;width:171px;height:145px;background:linear-gradient(#000000 0,#000000 50%,#000000 50%,#000000 100%);border:2px solid #fff;box-sizing:border-box"></div><div style="left:565.7px;top:851px;width:171px;height:145px;background:linear-gradient(#1c1c1a 0,#1c1c1a 50%,#1c1c1c 50%,#1c1c1c 100%);border:2px solid #fff;box-sizing:border-box"></div><div style="left:764.4px;top:851px;width:171px;height:145px;background:linear-gradient(#353434 0,#353434 50%,#333333 50%,#333333 100%);border:2px solid #fff;box-sizing:border-box"></div><div style="left:963.1px;top:851px;width:171px;height:145px;background:linear-gradient(#4e4c4c 0,#4e4c4c 50%,#4d4d4d 50%,#4d4d4d 100%);border:2px solid #fff;box-sizing:border-box"></div><div style="left:1161.8px;top:851px;width:171px;height:145px;background:linear-gradient(#686565 0,#686565 50%,#666666 50%,#666666 100%);border:2px solid #fff;box-sizing:border-box"></div><div style="left:1360.5px;top:851px;width:171px;height:145px;background:linear-gradient(#838181 0,#838181 50%,#808080 50%,#808080 100%);border:2px solid #fff;box-sizing:border-box"></div><div style="left:1559.2px;top:851px;width:171px;height:145px;background:linear-gradient(#9c9a98 0,#9c9a98 50%,#999999 50%,#999999 100%);border:2px solid #fff;box-sizing:border-box"></div><div style="left:1757.9px;top:851px;width:171px;height:145px;background:linear-gradient(#b6b2b0 0,#b6b2b0 50%,#b3b3b3 50%,#b3b3b3 100%);border:2px solid #fff;box-sizing:border-box"></div><div style="left:1956.6px;top:851px;width:171px;height:145px;background:linear-gradient(#cfcbca 0,#cfcbca 50%,#cccccc 50%,#cccccc 100%);border:2px solid #fff;box-sizing:border-box"></div><div style="left:2155.3px;top:851px;width:171px;height:145px;background:linear-gradient(#e9e6e5 0,#e9e6e5 50%,#e6e6e6 50%,#e6e6e6 100%);border:2px solid #fff;box-sizing:border-box"></div><div style="left:2354px;top:851px;width:171px;height:145px;background:linear-gradient(#fff9f9 0,#fff9f9 50%,#fafafa 50%,#fafafa 100%);border:2px solid #fff;box-sizing:border-box"></div><svg style="left:335px;top:843px" width="2225" height="185" viewBox="335 843 2225 185"><text x="448.18" y="1015.9" font-size="16" textLength="8.63" lengthAdjust="spacingAndGlyphs" fill="#fff">0</text><text x="642.28" y="1015.9" font-size="16" textLength="17.26" lengthAdjust="spacingAndGlyphs" fill="#fff">10</text><text x="841.18" y="1015.9" font-size="16" textLength="17.26" lengthAdjust="spacingAndGlyphs" fill="#fff">20</text><text x="1039.98" y="1015.9" font-size="16" textLength="17.26" lengthAdjust="spacingAndGlyphs" fill="#fff">30</text><text x="1238.79" y="1015.9" font-size="16" textLength="17.26" lengthAdjust="spacingAndGlyphs" fill="#fff">40</text><text x="1437.36" y="1015.9" font-size="16" textLength="17.26" lengthAdjust="spacingAndGlyphs" fill="#fff">50</text><text x="1635.98" y="1015.9" font-size="16" textLength="17.26" lengthAdjust="spacingAndGlyphs" fill="#fff">60</text><text x="1834.67" y="1015.9" font-size="16" textLength="17.26" lengthAdjust="spacingAndGlyphs" fill="#fff">70</text><text x="2033.43" y="1015.9" font-size="16" textLength="17.26" lengthAdjust="spacingAndGlyphs" fill="#fff">80</text><text x="2232.11" y="1015.9" font-size="16" textLength="17.26" lengthAdjust="spacingAndGlyphs" fill="#fff">90</text><text x="2426.26" y="1015.9" font-size="16" textLength="25.89" lengthAdjust="spacingAndGlyphs" fill="#fff">100</text><g transform="translate(355.3 907.9) rotate(-90)"><text x="-0.04" y="0" font-size="17.6" textLength="49.94" lengthAdjust="spacingAndGlyphs" fill="#fff">Actual</text></g><g transform="translate(355.3 989) rotate(-90)"><text x="-0.38" y="0" font-size="17.6" textLength="49.11" lengthAdjust="spacingAndGlyphs" fill="#fff">Target</text></g></svg></section><section id="reading"><svg style="left:220px;top:1050px" width="400" height="300" viewBox="220 1050 400 300"><text y="1123" font-size="43.3" fill="#f0f0f0"><tspan x="229.38" textLength="145.54" lengthAdjust="spacingAndGlyphs">Current</tspan> <tspan x="386.37" textLength="155.83" lengthAdjust="spacingAndGlyphs">Reading</tspan></text><text y="1183" font-size="35.6" fill="#f0f0f0"><tspan x="230.2" textLength="27.99" lengthAdjust="spacingAndGlyphs">x:</tspan> <tspan x="265.69" textLength="110.32" lengthAdjust="spacingAndGlyphs">0.3162</tspan></text><text y="1183" font-size="35.6" fill="#f0f0f0"><tspan x="442.01" textLength="29.56" lengthAdjust="spacingAndGlyphs">y:</tspan> <tspan x="478.3" textLength="69.57" lengthAdjust="spacingAndGlyphs">0.33</tspan></text><text y="1230.7" font-size="35.6" fill="#f0f0f0"><tspan x="229.03" textLength="42.12" lengthAdjust="spacingAndGlyphs">u':</tspan> <tspan x="277.88" textLength="111.04" lengthAdjust="spacingAndGlyphs">0.1999</tspan></text><text y="1230.7" font-size="35.6" fill="#f0f0f0"><tspan x="441.97" textLength="37.8" lengthAdjust="spacingAndGlyphs">v':</tspan> <tspan x="486.79" textLength="110.06" lengthAdjust="spacingAndGlyphs">0.4694</tspan></text><text y="1278.8" font-size="35.6" fill="#f0f0f0"><tspan x="228.91" textLength="110.31" lengthAdjust="spacingAndGlyphs">cd/m²:</tspan> <tspan x="346.39" textLength="150.38" lengthAdjust="spacingAndGlyphs">281.0728</tspan></text><text y="1327.4" font-size="35.6" fill="#f0f0f0"><tspan x="229.69" textLength="40.61" lengthAdjust="spacingAndGlyphs">ΔE</tspan> <tspan x="279.86" textLength="91.58" lengthAdjust="spacingAndGlyphs">2000:</tspan> <tspan x="378.89" textLength="69.99" lengthAdjust="spacingAndGlyphs">2.13</tspan></text></svg></section><section id="cie"><svg style="left:640px;top:1040px" width="450" height="330" viewBox="640 1040 450 330"><defs><radialGradient id="cw" gradientUnits="userSpaceOnUse" cx="895" cy="1204" r="400"><stop offset="0" stop-color="#fff" stop-opacity="1"/><stop offset="1" stop-color="#fff" stop-opacity="0"/></radialGradient><clipPath id="cc"><rect x="716" y="1082" width="356.3" height="235.3"/></clipPath></defs><foreignObject x="716" y="1082" width="356.3" height="235.3"><div xmlns="http://www.w3.org/1999/xhtml" style="position:static;width:100%;height:100%;background:conic-gradient(from 0deg at 179px 122px,#6aff4a 0deg,#f5ff57 40deg,#ffc66b 57deg,#ff5c5c 88deg,#ff2987 123deg,#f229ff 172deg,#7966ff 217deg,#5c99ff 236deg,#29ffff 269deg,#00ff80 303deg,#47ff47 350deg,#6aff4a 360deg)"></div></foreignObject><rect x="716" y="1082" width="356.3" height="235.3" fill="url(#cw)"/><g clip-path="url(#cc)"><line x1="755" y1="1321" x2="1078" y2="1116.5" stroke="#000" stroke-width="4.2"/></g><rect x="716" y="1082" width="356.3" height="235.3" fill="none" stroke="#8a8a8a" stroke-width="2"/><rect x="884.3" y="1188.1" width="18.6" height="18.6" fill="#fff" stroke="#000" stroke-width="2"/><circle cx="917.2" cy="1194.8" r="6.9" fill="#fff" stroke="#000" stroke-width="1.8"/><circle cx="919.8" cy="1191.8" r="6.9" fill="#fff" stroke="#000" stroke-width="1.8"/><circle cx="918" cy="1193.2" r="6.9" fill="#fff" stroke="#000" stroke-width="1.8"/><circle cx="919.2" cy="1192.6" r="6.9" fill="#fff" stroke="#000" stroke-width="1.8"/><circle cx="918.4" cy="1194.2" r="6.9" fill="#fff" stroke="#000" stroke-width="1.8"/><line x1="731.8" y1="1318.3" x2="731.8" y2="1325.3" stroke="#dcdcdc" stroke-width="1.6"/><text x="711.05" y="1347" font-size="22.4" textLength="41.07" lengthAdjust="spacingAndGlyphs" fill="#d6d6d6">0.29</text><line x1="803" y1="1318.3" x2="803" y2="1325.3" stroke="#dcdcdc" stroke-width="1.6"/><text x="788.09" y="1347" font-size="22.4" textLength="29.33" lengthAdjust="spacingAndGlyphs" fill="#d6d6d6">0.3</text><line x1="874.2" y1="1318.3" x2="874.2" y2="1325.3" stroke="#dcdcdc" stroke-width="1.6"/><text x="853.47" y="1347" font-size="22.4" textLength="41.07" lengthAdjust="spacingAndGlyphs" fill="#d6d6d6">0.31</text><line x1="945.4" y1="1318.3" x2="945.4" y2="1325.3" stroke="#dcdcdc" stroke-width="1.6"/><text x="924.68" y="1347" font-size="22.4" textLength="41.07" lengthAdjust="spacingAndGlyphs" fill="#d6d6d6">0.32</text><line x1="1017" y1="1318.3" x2="1017" y2="1325.3" stroke="#dcdcdc" stroke-width="1.6"/><text x="996.22" y="1347" font-size="22.4" textLength="41.07" lengthAdjust="spacingAndGlyphs" fill="#d6d6d6">0.33</text><line x1="708" y1="1149.4" x2="715" y2="1149.4" stroke="#dcdcdc" stroke-width="1.6"/><text x="666.05" y="1156.8" font-size="22.4" textLength="41.07" lengthAdjust="spacingAndGlyphs" fill="#d6d6d6">0.34</text><line x1="708" y1="1243.7" x2="715" y2="1243.7" stroke="#dcdcdc" stroke-width="1.6"/><text x="666.49" y="1251.1" font-size="22.4" textLength="41.07" lengthAdjust="spacingAndGlyphs" fill="#d6d6d6">0.32</text><text x="815.29" y="1074.8" font-size="21.4" textLength="108.05" lengthAdjust="spacingAndGlyphs" fill="#d6d6d6">CIE 1931 xy</text></svg></section><section id="table"><div style="left:1085.5px;top:1039.5px;width:1219.5px;height:302px;background:#121212"></div><div style="left:1087.5px;top:1041.5px;width:1216px;height:35.5px;background:linear-gradient(#343434 0%,#2a2a2a 45%,#141414 55%,#101010 100%)"></div><div style="left:1087.5px;top:1076.8px;width:1216px;height:33.2px;background:#3e3e3e"></div><div style="left:1087.5px;top:1110px;width:1216px;height:33px;background:#808080"></div><div style="left:1087.5px;top:1143px;width:1216px;height:33px;background:#3e3e3e"></div><div style="left:1087.5px;top:1176px;width:1216px;height:32.7px;background:#808080"></div><div style="left:1087.5px;top:1208.7px;width:1216px;height:32.2px;background:#3e3e3e"></div><div style="left:1087.5px;top:1240.9px;width:1216px;height:33.3px;background:#808080"></div><div style="left:1087.5px;top:1274.2px;width:1216px;height:32.7px;background:#3e3e3e"></div><div style="left:1087.5px;top:1306.9px;width:1216px;height:33px;background:#808080"></div><div style="left:2024.3px;top:1110.5px;width:93px;height:30.5px;background:#f0f0f0;border:1px solid #fff;box-sizing:border-box"></div><svg style="left:1086px;top:1040px" width="1220" height="302" viewBox="1086 1040 1220 302"><text x="1311.9" y="1065" font-size="17" textLength="8.79" lengthAdjust="spacingAndGlyphs" fill="#fff">0</text><text x="1410.21" y="1065" font-size="17" textLength="17.59" lengthAdjust="spacingAndGlyphs" fill="#fff">10</text><text x="1503.42" y="1065" font-size="17" textLength="17.59" lengthAdjust="spacingAndGlyphs" fill="#fff">20</text><text x="1596.71" y="1065" font-size="17" textLength="17.59" lengthAdjust="spacingAndGlyphs" fill="#fff">30</text><text x="1689.53" y="1065" font-size="17" textLength="17.59" lengthAdjust="spacingAndGlyphs" fill="#fff">40</text><text x="1782.6" y="1065" font-size="17" textLength="17.59" lengthAdjust="spacingAndGlyphs" fill="#fff">50</text><text x="1875.51" y="1065" font-size="17" textLength="17.59" lengthAdjust="spacingAndGlyphs" fill="#fff">60</text><text x="1968.51" y="1065" font-size="17" textLength="17.59" lengthAdjust="spacingAndGlyphs" fill="#fff">70</text><text x="2061.27" y="1065" font-size="17" textLength="17.59" lengthAdjust="spacingAndGlyphs" fill="#fff">80</text><text x="2154.25" y="1065" font-size="17" textLength="17.59" lengthAdjust="spacingAndGlyphs" fill="#fff">90</text><text x="2242.92" y="1065" font-size="17" textLength="26.38" lengthAdjust="spacingAndGlyphs" fill="#fff">100</text><text x="1101.68" y="1100.6" font-size="21.2" textLength="66.97" lengthAdjust="spacingAndGlyphs" fill="#fff" font-weight="700">x: CIE31</text><text x="1264.93" y="1100.6" font-size="21.3" textLength="52.7" lengthAdjust="spacingAndGlyphs" fill="#fff">0.4443</text><text x="1377.93" y="1100.6" font-size="21.3" textLength="52.7" lengthAdjust="spacingAndGlyphs" fill="#fff">0.3165</text><text x="1470.93" y="1100.6" font-size="21.3" textLength="52.7" lengthAdjust="spacingAndGlyphs" fill="#fff">0.3160</text><text x="1563.53" y="1100.6" font-size="21.3" textLength="52.7" lengthAdjust="spacingAndGlyphs" fill="#fff">0.3164</text><text x="1656.53" y="1100.6" font-size="21.3" textLength="52.7" lengthAdjust="spacingAndGlyphs" fill="#fff">0.3160</text><text x="1749.83" y="1100.6" font-size="21.3" textLength="52.7" lengthAdjust="spacingAndGlyphs" fill="#fff">0.3160</text><text x="1842.83" y="1100.6" font-size="21.3" textLength="52.7" lengthAdjust="spacingAndGlyphs" fill="#fff">0.3162</text><text x="1935.53" y="1100.6" font-size="21.3" textLength="52.7" lengthAdjust="spacingAndGlyphs" fill="#fff">0.3163</text><text x="2028.53" y="1100.6" font-size="21.3" textLength="52.7" lengthAdjust="spacingAndGlyphs" fill="#fff">0.3162</text><text x="2121.23" y="1100.6" font-size="21.3" textLength="52.7" lengthAdjust="spacingAndGlyphs" fill="#fff">0.3160</text><text x="2214.23" y="1100.6" font-size="21.3" textLength="52.7" lengthAdjust="spacingAndGlyphs" fill="#fff">0.3162</text><text x="1101.67" y="1133.9" font-size="21.2" textLength="66.39" lengthAdjust="spacingAndGlyphs" fill="#f6f6f6" font-weight="700">y: CIE31</text><text x="1264.93" y="1133.9" font-size="21.3" textLength="52.7" lengthAdjust="spacingAndGlyphs" fill="#f0f0f0">0.1682</text><text x="1377.93" y="1133.9" font-size="21.3" textLength="52.7" lengthAdjust="spacingAndGlyphs" fill="#f0f0f0">0.3307</text><text x="1470.93" y="1133.9" font-size="21.3" textLength="52.7" lengthAdjust="spacingAndGlyphs" fill="#f0f0f0">0.3302</text><text x="1563.53" y="1133.9" font-size="21.3" textLength="52.7" lengthAdjust="spacingAndGlyphs" fill="#f0f0f0">0.3300</text><text x="1656.53" y="1133.9" font-size="21.3" textLength="52.7" lengthAdjust="spacingAndGlyphs" fill="#f0f0f0">0.3303</text><text x="1749.83" y="1133.9" font-size="21.3" textLength="52.7" lengthAdjust="spacingAndGlyphs" fill="#f0f0f0">0.3298</text><text x="1842.83" y="1133.9" font-size="21.3" textLength="52.7" lengthAdjust="spacingAndGlyphs" fill="#f0f0f0">0.3301</text><text x="1935.53" y="1133.9" font-size="21.3" textLength="52.7" lengthAdjust="spacingAndGlyphs" fill="#f0f0f0">0.3297</text><text x="2028.53" y="1133.9" font-size="21.3" textLength="52.7" lengthAdjust="spacingAndGlyphs" fill="#000">0.3299</text><text x="2121.23" y="1133.9" font-size="21.3" textLength="52.7" lengthAdjust="spacingAndGlyphs" fill="#f0f0f0">0.3297</text><text x="2214.23" y="1133.9" font-size="21.3" textLength="52.7" lengthAdjust="spacingAndGlyphs" fill="#f0f0f0">0.3300</text><text x="1101.51" y="1166.9" font-size="21.2" textLength="11.37" lengthAdjust="spacingAndGlyphs" fill="#fff" font-weight="700">Y</text><text x="1264.93" y="1166.9" font-size="21.3" textLength="52.7" lengthAdjust="spacingAndGlyphs" fill="#fff">0.0029</text><text x="1377.73" y="1166.9" font-size="21.3" textLength="52.7" lengthAdjust="spacingAndGlyphs" fill="#fff">2.8420</text><text x="1470.79" y="1166.9" font-size="21.3" textLength="52.7" lengthAdjust="spacingAndGlyphs" fill="#fff">9.0846</text><text x="1562.89" y="1166.9" font-size="21.3" textLength="62.29" lengthAdjust="spacingAndGlyphs" fill="#fff">19.9469</text><text x="1656.54" y="1166.9" font-size="21.3" textLength="62.29" lengthAdjust="spacingAndGlyphs" fill="#fff">37.1796</text><text x="1749.62" y="1166.9" font-size="21.3" textLength="62.29" lengthAdjust="spacingAndGlyphs" fill="#fff">60.2136</text><text x="1842.75" y="1166.9" font-size="21.3" textLength="62.29" lengthAdjust="spacingAndGlyphs" fill="#fff">89.6018</text><text x="1934.89" y="1166.9" font-size="21.3" textLength="71.87" lengthAdjust="spacingAndGlyphs" fill="#fff">124.9771</text><text x="2027.89" y="1166.9" font-size="21.3" textLength="71.87" lengthAdjust="spacingAndGlyphs" fill="#fff">169.5679</text><text x="2121.03" y="1166.9" font-size="21.3" textLength="71.87" lengthAdjust="spacingAndGlyphs" fill="#fff">221.5683</text><text x="2214.03" y="1166.9" font-size="21.3" textLength="71.87" lengthAdjust="spacingAndGlyphs" fill="#fff">281.0728</text><text x="1101.6" y="1199.6" font-size="21.2" textLength="69.91" lengthAdjust="spacingAndGlyphs" fill="#f6f6f6" font-weight="700">Target Y</text><text x="1264.93" y="1199.6" font-size="21.3" textLength="52.7" lengthAdjust="spacingAndGlyphs" fill="#f0f0f0">0.0000</text><text x="1377.73" y="1199.6" font-size="21.3" textLength="52.7" lengthAdjust="spacingAndGlyphs" fill="#f0f0f0">2.9034</text><text x="1470.79" y="1199.6" font-size="21.3" textLength="52.7" lengthAdjust="spacingAndGlyphs" fill="#f0f0f0">9.3049</text><text x="1563.33" y="1199.6" font-size="21.3" textLength="62.29" lengthAdjust="spacingAndGlyphs" fill="#f0f0f0">20.3137</text><text x="1656.54" y="1199.6" font-size="21.3" textLength="62.29" lengthAdjust="spacingAndGlyphs" fill="#f0f0f0">37.3457</text><text x="1749.62" y="1199.6" font-size="21.3" textLength="62.29" lengthAdjust="spacingAndGlyphs" fill="#f0f0f0">60.6725</text><text x="1842.75" y="1199.6" font-size="21.3" textLength="62.29" lengthAdjust="spacingAndGlyphs" fill="#f0f0f0">89.5348</text><text x="1934.89" y="1199.6" font-size="21.3" textLength="71.87" lengthAdjust="spacingAndGlyphs" fill="#f0f0f0">125.1340</text><text x="2027.89" y="1199.6" font-size="21.3" textLength="71.87" lengthAdjust="spacingAndGlyphs" fill="#f0f0f0">169.7195</text><text x="2121.03" y="1199.6" font-size="21.3" textLength="71.87" lengthAdjust="spacingAndGlyphs" fill="#f0f0f0">222.4123</text><text x="2214.03" y="1199.6" font-size="21.3" textLength="71.87" lengthAdjust="spacingAndGlyphs" fill="#f0f0f0">281.0728</text><text x="1101.06" y="1232.6" font-size="21.2" textLength="143.07" lengthAdjust="spacingAndGlyphs" fill="#fff" font-weight="700">Gamma Log/Log</text><text x="1264.29" y="1232.6" font-size="21.3" textLength="52.7" lengthAdjust="spacingAndGlyphs" fill="#fff">1.2778</text><text x="1377.73" y="1232.6" font-size="21.3" textLength="52.7" lengthAdjust="spacingAndGlyphs" fill="#fff">2.0122</text><text x="1470.73" y="1232.6" font-size="21.3" textLength="52.7" lengthAdjust="spacingAndGlyphs" fill="#fff">2.1324</text><text x="1563.33" y="1232.6" font-size="21.3" textLength="52.7" lengthAdjust="spacingAndGlyphs" fill="#fff">2.1854</text><text x="1656.33" y="1232.6" font-size="21.3" textLength="52.7" lengthAdjust="spacingAndGlyphs" fill="#fff">2.2077</text><text x="1749.63" y="1232.6" font-size="21.3" textLength="52.7" lengthAdjust="spacingAndGlyphs" fill="#fff">2.2354</text><text x="1842.63" y="1232.6" font-size="21.3" textLength="52.7" lengthAdjust="spacingAndGlyphs" fill="#fff">2.2380</text><text x="1935.33" y="1232.6" font-size="21.3" textLength="52.7" lengthAdjust="spacingAndGlyphs" fill="#fff">2.2546</text><text x="2028.33" y="1232.6" font-size="21.3" textLength="52.7" lengthAdjust="spacingAndGlyphs" fill="#fff">2.2647</text><text x="2121.03" y="1232.6" font-size="21.3" textLength="52.7" lengthAdjust="spacingAndGlyphs" fill="#fff">2.3054</text><text x="2214.03" y="1232.6" font-size="21.3" textLength="52.7" lengthAdjust="spacingAndGlyphs" fill="#fff">2.2749</text><text x="1101.14" y="1265.6" font-size="21.2" textLength="33.24" lengthAdjust="spacingAndGlyphs" fill="#f6f6f6" font-weight="700">CCT</text><text x="1264.94" y="1265.6" font-size="21.3" textLength="100.62" lengthAdjust="spacingAndGlyphs" fill="#f0f0f0">310986.0000</text><text x="1377.72" y="1265.6" font-size="21.3" textLength="81.46" lengthAdjust="spacingAndGlyphs" fill="#f0f0f0">6289.0000</text><text x="1470.72" y="1265.6" font-size="21.3" textLength="81.46" lengthAdjust="spacingAndGlyphs" fill="#f0f0f0">6317.0000</text><text x="1563.32" y="1265.6" font-size="21.3" textLength="81.46" lengthAdjust="spacingAndGlyphs" fill="#f0f0f0">6298.0000</text><text x="1656.32" y="1265.6" font-size="21.3" textLength="81.46" lengthAdjust="spacingAndGlyphs" fill="#f0f0f0">6316.0000</text><text x="1749.62" y="1265.6" font-size="21.3" textLength="81.46" lengthAdjust="spacingAndGlyphs" fill="#f0f0f0">6321.0000</text><text x="1842.62" y="1265.6" font-size="21.3" textLength="81.46" lengthAdjust="spacingAndGlyphs" fill="#f0f0f0">6311.0000</text><text x="1935.32" y="1265.6" font-size="21.3" textLength="81.46" lengthAdjust="spacingAndGlyphs" fill="#f0f0f0">6307.0000</text><text x="2028.32" y="1265.6" font-size="21.3" textLength="81.46" lengthAdjust="spacingAndGlyphs" fill="#f0f0f0">6309.0000</text><text x="2121.02" y="1265.6" font-size="21.3" textLength="81.46" lengthAdjust="spacingAndGlyphs" fill="#f0f0f0">6322.0000</text><text x="2214.02" y="1265.6" font-size="21.3" textLength="81.46" lengthAdjust="spacingAndGlyphs" fill="#f0f0f0">6311.0000</text><text x="1101.07" y="1297.5" font-size="21.2" textLength="70.41" lengthAdjust="spacingAndGlyphs" fill="#fff" font-weight="700">ΔE 2000</text><text x="1264.93" y="1297.5" font-size="21.3" textLength="52.7" lengthAdjust="spacingAndGlyphs" fill="#fff">0.1077</text><text x="1377.93" y="1297.5" font-size="21.3" textLength="52.7" lengthAdjust="spacingAndGlyphs" fill="#fff">0.4817</text><text x="1470.93" y="1297.5" font-size="21.3" textLength="52.7" lengthAdjust="spacingAndGlyphs" fill="#fff">0.6688</text><text x="1562.89" y="1297.5" font-size="21.3" textLength="52.7" lengthAdjust="spacingAndGlyphs" fill="#fff">1.0115</text><text x="1655.89" y="1297.5" font-size="21.3" textLength="52.7" lengthAdjust="spacingAndGlyphs" fill="#fff">1.0069</text><text x="1749.19" y="1297.5" font-size="21.3" textLength="52.7" lengthAdjust="spacingAndGlyphs" fill="#fff">1.3108</text><text x="1842.19" y="1297.5" font-size="21.3" textLength="52.7" lengthAdjust="spacingAndGlyphs" fill="#fff">1.4419</text><text x="1934.89" y="1297.5" font-size="21.3" textLength="52.7" lengthAdjust="spacingAndGlyphs" fill="#fff">1.8157</text><text x="2027.89" y="1297.5" font-size="21.3" textLength="52.7" lengthAdjust="spacingAndGlyphs" fill="#fff">1.9023</text><text x="2120.59" y="1297.5" font-size="21.3" textLength="52.7" lengthAdjust="spacingAndGlyphs" fill="#fff">1.9948</text><text x="2214.03" y="1297.5" font-size="21.3" textLength="52.7" lengthAdjust="spacingAndGlyphs" fill="#fff">2.1311</text><text x="1101.09" y="1330.5" font-size="21.2" textLength="56.3" lengthAdjust="spacingAndGlyphs" fill="#f6f6f6" font-weight="700">ΔE ITP</text><text x="1264.29" y="1330.5" font-size="21.3" textLength="62.29" lengthAdjust="spacingAndGlyphs" fill="#f0f0f0">17.4459</text><text x="1377.29" y="1330.5" font-size="21.3" textLength="52.7" lengthAdjust="spacingAndGlyphs" fill="#f0f0f0">1.6905</text><text x="1470.73" y="1330.5" font-size="21.3" textLength="52.7" lengthAdjust="spacingAndGlyphs" fill="#f0f0f0">2.0025</text><text x="1563.33" y="1330.5" font-size="21.3" textLength="52.7" lengthAdjust="spacingAndGlyphs" fill="#f0f0f0">2.2045</text><text x="1655.89" y="1330.5" font-size="21.3" textLength="52.7" lengthAdjust="spacingAndGlyphs" fill="#f0f0f0">1.8053</text><text x="1749.19" y="1330.5" font-size="21.3" textLength="52.7" lengthAdjust="spacingAndGlyphs" fill="#f0f0f0">1.9799</text><text x="1842.63" y="1330.5" font-size="21.3" textLength="52.7" lengthAdjust="spacingAndGlyphs" fill="#f0f0f0">2.0195</text><text x="1935.33" y="1330.5" font-size="21.3" textLength="52.7" lengthAdjust="spacingAndGlyphs" fill="#f0f0f0">2.2075</text><text x="2028.33" y="1330.5" font-size="21.3" textLength="52.7" lengthAdjust="spacingAndGlyphs" fill="#f0f0f0">2.1777</text><text x="2121.03" y="1330.5" font-size="21.3" textLength="52.7" lengthAdjust="spacingAndGlyphs" fill="#f0f0f0">2.1041</text><text x="2214.03" y="1330.5" font-size="21.3" textLength="52.7" lengthAdjust="spacingAndGlyphs" fill="#f0f0f0">2.1696</text></svg></section></main>
<footer id="strip"><div style="left:200px;top:1489.5px;width:2360px;height:62.5px;background:linear-gradient(#4b4b4b 0%,#3a3a3a 45%,#262626 100%)"></div><div style="left:201px;top:1489.5px;width:150px;height:61.5px;background:linear-gradient(#acacac 0%,#8a8a8a 40%,#5c5c5c 100%);border-radius:4px;box-shadow:inset 0 0 0 1px rgba(60,60,60,.35)"></div><div style="left:206px;top:1494.8px;width:140.4px;height:36.2px;background:#000000;border-radius:3px;box-shadow:inset 0 1px 2px rgba(0,0,0,.35)"></div><div style="left:353px;top:1489.5px;width:150px;height:61.5px;background:linear-gradient(#acacac 0%,#8a8a8a 40%,#5c5c5c 100%);border-radius:4px;box-shadow:inset 0 0 0 1px rgba(60,60,60,.35)"></div><div style="left:358px;top:1494.8px;width:140.4px;height:36.2px;background:#1a1a1a;border-radius:3px;box-shadow:inset 0 1px 2px rgba(0,0,0,.35)"></div><div style="left:505px;top:1489.5px;width:150px;height:61.5px;background:linear-gradient(#acacac 0%,#8a8a8a 40%,#5c5c5c 100%);border-radius:4px;box-shadow:inset 0 0 0 1px rgba(60,60,60,.35)"></div><div style="left:510px;top:1494.8px;width:140.4px;height:36.2px;background:#333333;border-radius:3px;box-shadow:inset 0 1px 2px rgba(0,0,0,.35)"></div><div style="left:657px;top:1489.5px;width:150px;height:61.5px;background:linear-gradient(#acacac 0%,#8a8a8a 40%,#5c5c5c 100%);border-radius:4px;box-shadow:inset 0 0 0 1px rgba(60,60,60,.35)"></div><div style="left:662px;top:1494.8px;width:140.4px;height:36.2px;background:#4d4d4d;border-radius:3px;box-shadow:inset 0 1px 2px rgba(0,0,0,.35)"></div><div style="left:809px;top:1489.5px;width:150px;height:61.5px;background:linear-gradient(#acacac 0%,#8a8a8a 40%,#5c5c5c 100%);border-radius:4px;box-shadow:inset 0 0 0 1px rgba(60,60,60,.35)"></div><div style="left:814px;top:1494.8px;width:140.4px;height:36.2px;background:#666666;border-radius:3px;box-shadow:inset 0 1px 2px rgba(0,0,0,.35)"></div><div style="left:961px;top:1489.5px;width:150px;height:61.5px;background:linear-gradient(#acacac 0%,#8a8a8a 40%,#5c5c5c 100%);border-radius:4px;box-shadow:inset 0 0 0 1px rgba(60,60,60,.35)"></div><div style="left:966px;top:1494.8px;width:140.4px;height:36.2px;background:#808080;border-radius:3px;box-shadow:inset 0 1px 2px rgba(0,0,0,.35)"></div><div style="left:1113px;top:1489.5px;width:150px;height:61.5px;background:linear-gradient(#acacac 0%,#8a8a8a 40%,#5c5c5c 100%);border-radius:4px;box-shadow:inset 0 0 0 1px rgba(60,60,60,.35)"></div><div style="left:1118px;top:1494.8px;width:140.4px;height:36.2px;background:#999999;border-radius:3px;box-shadow:inset 0 1px 2px rgba(0,0,0,.35)"></div><div style="left:1265px;top:1489.5px;width:150px;height:61.5px;background:linear-gradient(#acacac 0%,#8a8a8a 40%,#5c5c5c 100%);border-radius:4px;box-shadow:inset 0 0 0 1px rgba(60,60,60,.35)"></div><div style="left:1270px;top:1494.8px;width:140.4px;height:36.2px;background:#b3b3b3;border-radius:3px;box-shadow:inset 0 1px 2px rgba(0,0,0,.35)"></div><div style="left:1417px;top:1489.5px;width:150px;height:61.5px;background:linear-gradient(#acacac 0%,#8a8a8a 40%,#5c5c5c 100%);border-radius:4px;box-shadow:inset 0 0 0 1px rgba(60,60,60,.35)"></div><div style="left:1422px;top:1494.8px;width:140.4px;height:36.2px;background:#cccccc;border-radius:3px;box-shadow:inset 0 1px 2px rgba(0,0,0,.35)"></div><div style="left:1569px;top:1489.5px;width:150px;height:61.5px;background:linear-gradient(#acacac 0%,#8a8a8a 40%,#5c5c5c 100%);border-radius:4px;box-shadow:inset 0 0 0 1px rgba(60,60,60,.35)"></div><div style="left:1574px;top:1494.8px;width:140.4px;height:36.2px;background:#e6e6e6;border-radius:3px;box-shadow:inset 0 1px 2px rgba(0,0,0,.35)"></div><div style="left:1721px;top:1489.5px;width:150px;height:61.5px;background:linear-gradient(#1a1a1a,#323232);border-radius:4px"></div><div style="left:1726px;top:1494.8px;width:140.4px;height:36.2px;background:#ffffff;border-radius:3px;box-shadow:inset 0 1px 2px rgba(0,0,0,.35)"></div><svg style="left:200px;top:1530px" width="1700" height="22" viewBox="200 1530 1700 22"><text x="273" y="1545.5" font-size="10.6" textLength="5.42" lengthAdjust="spacingAndGlyphs" fill="#2e2e2e" font-weight="700">0</text><text x="422.17" y="1545.5" font-size="10.6" textLength="10.85" lengthAdjust="spacingAndGlyphs" fill="#2e2e2e" font-weight="700">10</text><text x="574.31" y="1545.5" font-size="10.6" textLength="10.85" lengthAdjust="spacingAndGlyphs" fill="#2e2e2e" font-weight="700">20</text><text x="726.36" y="1545.5" font-size="10.6" textLength="10.85" lengthAdjust="spacingAndGlyphs" fill="#2e2e2e" font-weight="700">30</text><text x="878.4" y="1545.5" font-size="10.6" textLength="10.85" lengthAdjust="spacingAndGlyphs" fill="#2e2e2e" font-weight="700">40</text><text x="1030.33" y="1545.5" font-size="10.6" textLength="10.85" lengthAdjust="spacingAndGlyphs" fill="#2e2e2e" font-weight="700">50</text><text x="1182.3" y="1545.5" font-size="10.6" textLength="10.85" lengthAdjust="spacingAndGlyphs" fill="#2e2e2e" font-weight="700">60</text><text x="1334.27" y="1545.5" font-size="10.6" textLength="10.85" lengthAdjust="spacingAndGlyphs" fill="#2e2e2e" font-weight="700">70</text><text x="1486.32" y="1545.5" font-size="10.6" textLength="10.85" lengthAdjust="spacingAndGlyphs" fill="#2e2e2e" font-weight="700">80</text><text x="1638.31" y="1545.5" font-size="10.6" textLength="10.85" lengthAdjust="spacingAndGlyphs" fill="#2e2e2e" font-weight="700">90</text><text x="1787.46" y="1545.5" font-size="10.6" textLength="16.27" lengthAdjust="spacingAndGlyphs" fill="#fff" font-weight="700">100</text></svg><div style="left:2237px;top:1510px;width:48.5px;height:42px;background:linear-gradient(#8a8a8a,#5e5e5e);border-radius:4px"></div><div style="left:2245.3px;top:1515px;width:31px;height:30px;background:linear-gradient(#b4b4b4,#8c8c8c);border:2px solid #2a2a2a;border-radius:5px;box-sizing:border-box"></div><div style="left:2254.5px;top:1523.5px;width:13.3px;height:12.8px;background:#000"></div><div style="left:2286.5px;top:1490px;width:45.1px;height:30px;background:linear-gradient(#b0b0b0,#8a8a8a 50%,#747474);border-radius:3px;box-shadow:inset 0 0 0 1px rgba(50,50,50,.4)"></div><div style="left:2299.3px;top:1497.5px;width:19px;height:19px;border-radius:50%;background:linear-gradient(#6a6a6a,#9a9a9a)"></div><div style="left:2331.6px;top:1490px;width:45.1px;height:30px;background:linear-gradient(#b0b0b0,#8a8a8a 50%,#747474);border-radius:3px;box-shadow:inset 0 0 0 1px rgba(50,50,50,.4)"></div><div style="left:2344.4px;top:1497.5px;width:19px;height:19px;border-radius:50%;background:linear-gradient(#6a6a6a,#9a9a9a)"></div><div style="left:2376.7px;top:1490px;width:45.1px;height:30px;background:linear-gradient(#b0b0b0,#8a8a8a 50%,#747474);border-radius:3px;box-shadow:inset 0 0 0 1px rgba(50,50,50,.4)"></div><div style="left:2389.5px;top:1497.5px;width:19px;height:19px;border-radius:50%;background:linear-gradient(#6a6a6a,#9a9a9a)"></div><div style="left:2421.8px;top:1490px;width:45.1px;height:30px;background:linear-gradient(#b0b0b0,#8a8a8a 50%,#747474);border-radius:3px;box-shadow:inset 0 0 0 1px rgba(50,50,50,.4)"></div><div style="left:2434.6px;top:1497.5px;width:19px;height:19px;border-radius:50%;background:linear-gradient(#6a6a6a,#9a9a9a)"></div><div style="left:2466.9px;top:1490px;width:45.1px;height:30px;background:linear-gradient(#b0b0b0,#8a8a8a 50%,#747474);border-radius:3px;box-shadow:inset 0 0 0 1px rgba(50,50,50,.4)"></div><div style="left:2479.7px;top:1497.5px;width:19px;height:19px;border-radius:50%;background:linear-gradient(#6a6a6a,#9a9a9a)"></div><div style="left:2512px;top:1490px;width:45.1px;height:30px;background:linear-gradient(#b0b0b0,#8a8a8a 50%,#747474);border-radius:3px;box-shadow:inset 0 0 0 1px rgba(50,50,50,.4)"></div><div style="left:2524.8px;top:1497.5px;width:19px;height:19px;border-radius:50%;background:linear-gradient(#6a6a6a,#9a9a9a)"></div><div style="left:2286.5px;top:1521px;width:136.1px;height:29.5px;background:linear-gradient(#b0b0b0,#8a8a8a 50%,#747474);border-radius:3px;box-shadow:inset 0 0 0 1px rgba(50,50,50,.4)"></div><div style="left:2422.6px;top:1521px;width:137.4px;height:29.5px;background:linear-gradient(#b0b0b0,#8a8a8a 50%,#747474);border-radius:3px;box-shadow:inset 0 0 0 1px rgba(50,50,50,.4)"></div><div style="left:2307.8px;top:1526.8px;width:19px;height:19px;border-radius:50%;background:linear-gradient(#8a8a8a,#b4b4b4)"></div><div style="left:2520.8px;top:1526.8px;width:19px;height:19px;border-radius:50%;background:linear-gradient(#8a8a8a,#b4b4b4)"></div><svg style="left:2230px;top:1488px" width="330" height="64" viewBox="2230 1488 330 64"><text x="2341.74" y="1543.5" font-size="21.6" textLength="53.02" lengthAdjust="spacingAndGlyphs" fill="#2c2c2c">Back</text><text x="2448.34" y="1543.5" font-size="21.6" textLength="54.05" lengthAdjust="spacingAndGlyphs" fill="#2c2c2c">Next</text><path d="M2316.4 1532.4l-3.6 4 3.6 4M2321.2 1532.4l-3.6 4 3.6 4" fill="none" stroke="#333" stroke-width="1.4"/><path d="M2526.4 1532.4l3.6 4-3.6 4M2531.2 1532.4l3.6 4-3.6 4" fill="none" stroke="#333" stroke-width="1.4"/></svg></footer>
<div id="watermark"><svg style="left:2160px;top:1460px" width="400" height="92" viewBox="2160 1460 400 92"><defs><filter id="wo" x="-5%" y="-20%" width="110%" height="140%"><feMorphology in="SourceAlpha" operator="dilate" radius="1.5" result="d"/><feGaussianBlur in="d" stdDeviation="0.5" result="b"/><feFlood flood-color="#dcdcdc"/><feComposite in2="b" operator="in" result="o"/><feMerge><feMergeNode in="o"/><feMergeNode in="SourceGraphic"/></feMerge></filter></defs><g opacity="0.62" filter="url(#wo)"><path d="M2227.2 1510.4L2224.6 1482.6L2177.6 1472L2179.6 1518.8L2208.2 1535.4L2259 1517.6" fill="none" stroke="#a81a22" stroke-width="4.5" stroke-linejoin="miter" stroke-linecap="butt"/><path d="M2229.4 1508.6L2229.2 1512.4L2188.5 1515L2187.4 1513.2Z" fill="#a81a22"/><path d="M2261.8 1517L2260 1519.6L2232.4 1512.8L2232.6 1511.2Z" fill="#a81a22"/><path d="M2189.2 1487.2Q2193.4 1484.6 2196.8 1484.2Q2202.6 1488.6 2206.6 1494.8L2230.6 1468.6L2232.6 1470Q2220.4 1486 2211.4 1501.6Q2208.2 1505 2205 1506.8Q2201.6 1498 2196.6 1492.8Q2193 1489.4 2189.2 1487.2Z" fill="#2c2a2a"/><text x="2233.74" y="1508.7" font-size="38.4" textLength="195.17" lengthAdjust="spacingAndGlyphs" fill="#a81a22" font-weight="700" stroke="#a81a22" stroke-width="1.1">NOTEBOOK</text><text x="2431.3" y="1508.7" font-size="38.4" textLength="117.28" lengthAdjust="spacingAndGlyphs" fill="#3a3a3a" stroke="#3a3a3a" stroke-width="0.9">CHECK</text></g></svg></div>
</div></body></html>
